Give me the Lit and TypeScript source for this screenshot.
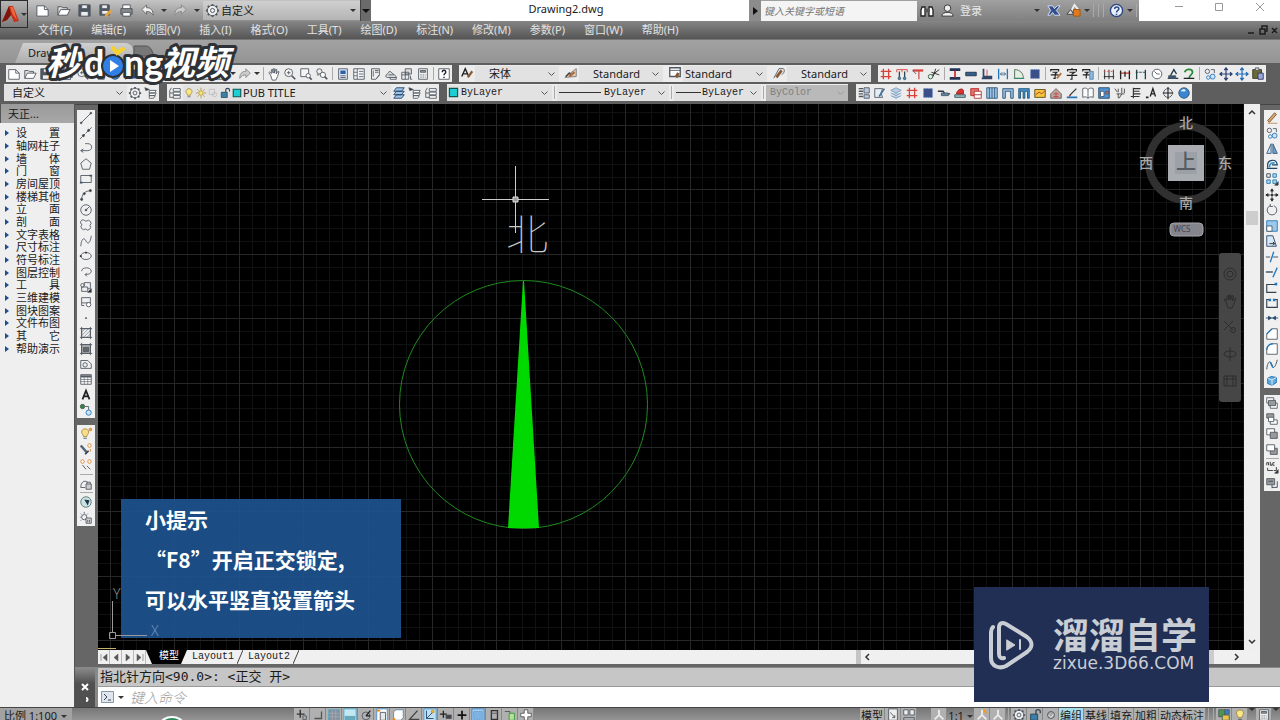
import { LitElement, html, svg, css, nothing, SVGTemplateResult } from "lit";
import { customElement } from "lit/decorators.js";

/* Glyphs of the toolbars, all on a 16 x 16 grid with a grey default stroke. */
const G: Record<string, SVGTemplateResult> = {
  new: svg`<path d="M2 3h8l4 4v7H2z" fill="#fff"/><path d="M10 3v4h4"/>`,
  open: svg`<path d="M2 13V4h4l1 1h5v3" fill="#ddd"/><path d="M2 13l3-6h10l-3 6z" fill="#fff"/>`,
  save: svg`<path d="M2 2h12v12H2z" fill="#4a5562"/><path d="M5 2h6v4H5zM4 9h8v5H4z" fill="#eee"/>`,
  saveas: svg`<path d="M2 2h10v11H2z" fill="#4a5562"/><path d="M4 2h6v4H4zM4 8h7v4H4z" fill="#eee"/><path d="M8 14l6-6" stroke="#e8a33c" stroke-width="3"/>`,
  print: svg`<path d="M4 6V2h8v4M4 11v3h8v-3z" fill="#fff"/><path d="M2 6h12v6H2z" fill="#888"/><path d="M4 10h8v4H4z" fill="#fff"/>`,
  undo: svg`<path d="M2 7l5-5v3c5 0 7 3 7 8-2-3-4-4-7-4v3z" fill="#eee" stroke="#666"/>`,
  redo: svg`<path d="M14 7L9 2v3c-5 0-7 3-7 8 2-3 4-4 7-4v3z" fill="#ccc" stroke="#888"/>`,
  gear: svg`<circle cx="8" cy="8" r="5.5" fill="#eee"/><circle cx="8" cy="8" r="2.2"/><path d="M8 1v2M8 13v2M1 8h2M13 8h2M3 3l1.5 1.5M11.500 11.500L13 13M13 3l-1.500 1.500M3 13l1.500-1.500" stroke-width="2"/>`,
  hand: svg`<path d="M4 9L2 6.500l1-.8 2 1.800V3l1.300-.3L7 7V2h1.500v5L10 2.500l1.200.4L10.500 8l2-3 1.200.5L12 11l-2 4H6z" fill="#fff"/>`,
  zoom: svg`<circle cx="6.500" cy="6.500" r="4.500" fill="#f5f5f5"/><path d="M10 10l4 4" stroke-width="2"/><path d="M4.500 6.500h4M6.500 4.500v4"/>`,
  zoomw: svg`<path d="M2 2h9v9H2z" fill="#f5f5f5"/><circle cx="10.500" cy="10" r="2.500" fill="#fff"/><path d="M12 12l2.500 2.500" stroke-width="2"/>`,
  zoomp: svg`<circle cx="5" cy="5" r="3"/><circle cx="9" cy="9" r="3" fill="#fff"/><path d="M11 11l3 3" stroke-width="2"/><path d="M2 9h3"/>`,
  prop: svg`<path d="M3 2h10v12H3z" fill="#dfe9f5"/><path d="M5 4h6v4H5z" fill="#2d5fa8" stroke="none"/><path d="M5 10h6M5 12h6"/>`,
  design: svg`<path d="M2 2h12v12H2z" fill="#f5f5f5"/><path d="M6 2v12M2 6h4M2 10h4M8 5h5M8 8h5M8 11h5" stroke="#567"/>`,
  palette: svg`<path d="M4 2h9v7l-4 5H4z" fill="#eee"/><path d="M6 4v7M8 4h4M8 6h4"/><path d="M10 13l3-4"/>`,
  sheet: svg`<path d="M2 11c0-3 3-3 4-6 3 0 3 3 6 4 2 1 2 3 2 3H4z" fill="#ddd"/><path d="M5 9h6M7 12h7v2H7z" fill="#fff"/>`,
  blocks: svg`<path d="M6 2h7v6H6z" fill="#ddd"/><path d="M2 6h8v8H2zM2 9h8M6 6v8"/><path d="M12 10v4h2"/>`,
  calc: svg`<path d="M3 2h10v12H3z" fill="#f5f5f5"/><path d="M5 4h6v2H5z" fill="#999"/><path d="M5 9h6M5 11.500h6" stroke-dasharray="1.500 1"/>`,
  help: svg`<path d="M2 2h12v12H2z" fill="#fff"/><path d="M6 6c0-3 4-3 4 0 0 1.500-2 1.500-2 3.500M8 11v1.500" stroke="#223" stroke-width="1.600"/>`,
  styleA: svg`<path d="M2 12L6 3l4 9M3.500 9h5" stroke="#222" stroke-width="1.600"/><path d="M9 13l5-7" stroke="#8a5a35" stroke-width="2.500"/>`,
  styleD: svg`<path d="M1 13L14 3v9z" fill="#e6c8b0" stroke="#777"/><path d="M2 12l4-4 2 2" stroke="#444" stroke-width="1.500"/><path d="M6 12l6-5" stroke="#a36b43" stroke-width="2.500"/>`,
  styleT: svg`<path d="M2 2h12v10H2z" fill="#fff" stroke-width="1.500"/><path d="M2 5h12"/><path d="M9 13l3-5" stroke="#8a5a35" stroke-width="3.500"/>`,
  styleM: svg`<path d="M2 14L8 3h5c2 2 1 5-2 7"/><path d="M5 13l6-8" stroke="#8a5a35" stroke-width="3"/>`,
  axis: svg`<path d="M5 2v12M11 2v12M2 5h12M2 11h12" stroke="#d8403a" stroke-width="1.500"/>`,
  axis2: svg`<path d="M2 3h12M2 3v3M8 3v3M14 3v3" stroke="#d8403a"/><path d="M5 5v9M11 5v9" stroke="#345" stroke-width="1.500"/><circle cx="5" cy="13" r="1.500" fill="#39c"/><circle cx="11" cy="13" r="1.500" fill="#39c"/>`,
  axis3: svg`<path d="M2 4h12" stroke="#d8403a" stroke-width="2.500"/><path d="M9 4v10" stroke="#c55" stroke-width="1.500"/><path d="M2 4l4 4" stroke="#456"/>`,
  scissor: svg`<path d="M6 9l8-6M5 6l9 3M10 2l-3 9" stroke="#222"/><circle cx="4" cy="11" r="2.500" stroke="#2a5a3a"/>`,
  wall: svg`<path d="M2 3h12M2 13h12" stroke="#235" stroke-width="3"/><path d="M8 4v8" stroke="#c33" stroke-width="2"/>`,
  bar: svg`<path d="M2 6h12v4H2z" fill="#2f5f8f" stroke="#234"/>`,
  wallL: svg`<path d="M4 2v9h10M2 13h12" stroke="#346" stroke-width="2"/><path d="M8 3v7" stroke="#c44"/>`,
  gap: svg`<path d="M3 2v12M13 2v12" stroke="#27b" stroke-width="1.500"/><path d="M5 8h6M7 6L5 8l2 2M9 6l2 2-2 2" stroke="#468"/>`,
  door: svg`<path d="M3 13V3c6 0 10 4 10 10z" fill="#e5efe0" stroke="#465"/><path d="M2 13h12" stroke="#286"/>`,
  col: svg`<path d="M3 3h10v10H3z" fill="#3a4f8a" stroke="#57b" stroke-dasharray="1 1"/>`,
  zi: svg`<path d="M2 5V3h9v2M4 6h5L7 8v5H5M2 9h9" stroke="#222" stroke-width="1.300"/><path d="M9 13l5-6" stroke="#b5703a" stroke-width="2"/>`,
  zi2: svg`<path d="M8 1v2M3 5V3h10v2M5 6h6L8 8v6H6M2 9.500h12" stroke="#222" stroke-width="1.300"/>`,
  zi3: svg`<path d="M2 5V3h8v2M4 6h4L6 8v5M2 9h8" stroke="#222" stroke-width="1.300"/><path d="M10 5h4v9h-4z" fill="#8bb7e0" stroke="#58a"/>`,
  dim: svg`<path d="M2 11h12M3 3v11M8 3v11M13 3v11" stroke="#222"/><path d="M2 5h12" stroke="#d44" stroke-dasharray="2 2"/>`,
  dim2: svg`<path d="M2 7h12" stroke="#d6402f" stroke-width="1.500"/><path d="M3 4v10M13 4v10M8 5v6" stroke="#222" stroke-width="1.500"/>`,
  dim3: svg`<path d="M2 6h12" stroke="#345" stroke-dasharray="3 1"/><path d="M3 3v11M13 3v11" stroke="#244" stroke-width="1.500"/>`,
  rad: svg`<circle cx="8" cy="8" r="5.500" fill="#fff"/><path d="M8 8L5 5M8 8h3"/>`,
  elev: svg`<path d="M2 13h12M5 10l4-7 3 5" stroke="#234" stroke-width="1.500"/><path d="M3 10h8v3H3z" fill="#357"/>`,
  rot: svg`<path d="M3 6c2-5 9-4 9 0 0 3-4 3-4 7" stroke="#2a8a35" stroke-width="2"/><path d="M2 13h12" stroke="#222" stroke-width="1.500"/>`,
  copy: svg`<circle cx="5" cy="5" r="2.500"/><circle cx="11" cy="11" r="2.800" fill="#cfe2f5" stroke="#27b"/><circle cx="6" cy="12" r="2" stroke="#27b"/><path d="M9 3h4v4"/>`,
  move: svg`<path d="M8 1v14M1 8h14M6 3.500L8 1l2 2.500M6 12.500L8 15l2-2.500M3.500 6L1 8l2.500 2M12.500 6L15 8l-2.500 2" stroke="#2b3d70" stroke-width="1.400"/>`,
  moveB: svg`<path d="M8 1v14M1 8h14M6 3.500L8 1l2 2.500M6 12.500L8 15l2-2.500M3.500 6L1 8l2.500 2M12.500 6L15 8l-2.500 2" stroke="#1d6ab5" stroke-width="1.400"/>`,
  moveG: svg`<path d="M8 1v5M8 10v5M1 8h5M10 8h5M6.500 3.500L8 1l1.500 2.500zM6.500 12.500L8 15l1.500-2.500zM3.500 6.500L1 8l2.500 1.500zM12.500 6.500L15 8l-2.500 1.500zM7 7h2v2H7z" stroke="#2c2c2c" fill="#2c2c2c"/>`,
  paste: svg`<path d="M2 3h10v10H2z" fill="#6b6a35" stroke="#332"/><path d="M5 1h4v3H5z" fill="#ccc"/><path d="M8 7h6v7H8z" fill="#9aa8d8" stroke="#336"/>`,
  layer: svg`<path d="M6 3h8v3H6zM6 7h8v3H6zM6 11h8v3H6z" fill="#fff"/><path d="M2 5v8h4M2 8h4M4 2L2 5"/>`,
  layerB: svg`<path d="M5 2h9l-3 4H2zM5 6h9l-3 4H2zM5 10h9l-3 4H2z" fill="#9cc3ea" stroke="#246"/>`,
  layerP: svg`<path d="M6 5h8l-2 3H6zM6 8h8l-2 3H6zM6 11h7l-2 3H6z" fill="#fff"/><path d="M1 2l5 2-4 1z" fill="#222"/>`,
  sheets: svg`<path d="M2 3h5M2 6h5M2 9h5M2 12h5" stroke-width="1.500"/><path d="M8 2h6v6H8zM8 10h6v4H8z" fill="#b9cbe0"/>`,
  notes: svg`<path d="M2 3h9l-2 5 2 5H2z" fill="#e5eef5"/><path d="M7 12l6-9" stroke="#48749c" stroke-width="2"/>`,
  stack: svg`<path d="M2 5l6-3 6 3-6 3zM2 8l6 3 6-3M2 11l6 3 6-3" fill="#b8cee5" stroke="#7b9cbd"/>`,
  beam: svg`<path d="M1 6h6l2 3h6" stroke="#334" stroke-width="1.600"/><path d="M5 8h8v3H5z" fill="#58a"/>`,
  roof: svg`<path d="M2 13h12v-3H2z" fill="#9bb" stroke="#356"/><path d="M4 9c0-5 8-8 8-3v3z" fill="#d8332c" stroke="#922"/>`,
  red: svg`<path d="M2 3h9v8H2z" fill="#e6726c" stroke="#b22"/><path d="M6 6h8v8H6z" fill="#fff" stroke="#a33"/><path d="M6 10h8" stroke="#a33"/>`,
  curtain: svg`<path d="M2 2h12v12H2z" fill="#9cc7ea" stroke="#357"/><path d="M5 2v12M8 2v12M11 2v12" stroke="#357"/>`,
  arch: svg`<path d="M2 3h12v11h-3V6H5v8H2z" fill="#8fb9df" stroke="#357"/>`,
  arch2: svg`<path d="M2 3h12v11h-2V6h-3v8H7V6H4v8H2z" fill="#3f90cf" stroke="#257"/>`,
  yellow: svg`<path d="M2 4h12v9H2z" fill="#f5c53a" stroke="#5a4a1a"/><path d="M3 10l4-3 3 2 4-4" stroke="#a33"/>`,
  house: svg`<path d="M2 9l6-6 6 6v5H2z" fill="#b9a7a0" stroke="#655"/><path d="M5 9h6M5 12h6M8 7v7" stroke="#c44"/>`,
  slope: svg`<path d="M2 13h12" stroke="#27b" stroke-width="2"/><path d="M5 11l8-8" stroke="#333" stroke-width="1.500"/><path d="M4 13l3-3" stroke="#c33"/>`,
  book: svg`<path d="M8 4c-2-2-4-2-6-1v10c2-1 4-1 6 1 2-2 4-2 6-1V3c-2-1-4-1-6 1zM8 4v10" fill="#fff"/>`,
  win: svg`<path d="M2 2h12v12H2z" fill="#4f96d6" stroke="#246"/><path d="M4 6h4v6H4z" fill="#fff"/><path d="M10 6h3v3h-3z" fill="#e66"/>`,
  misc: svg`<path d="M2 3l3 4M6 3v4M10 2v6M13 3v5M4 9h9M6 9v5M10 9l-3 5" stroke="#444"/>`,
  sect: svg`<path d="M5 2v12M5 3h8M5 6h7M5 9h8M2 12h10" stroke="#333" stroke-width="1.300"/>`,
  textA: svg`<path d="M4 13L8 3l4 10M5.500 9.500h5" stroke="#222" stroke-width="2"/>`,
  dotA: svg`<path d="M6 12l3-9 3 9M7 9h4" stroke="#222" stroke-width="1.500"/><path d="M1 13h3" stroke="#222" stroke-width="2"/>`,
  north: svg`<circle cx="8" cy="8" r="5"/><path d="M8 1v14M2 8h12" stroke="#222" stroke-width="1.300"/>`,
  globe: svg`<circle cx="8" cy="8" r="6" fill="#3a86d0" stroke="#357"/><path d="M4 6c2-3 5-3 6-1-1 2-4 1-6 1z" fill="#e4f1fb" stroke="none"/>`,
  line: svg`<path d="M2 14L14 2"/><circle cx="2.500" cy="13.500" r="1" fill="#456"/><circle cx="13.500" cy="2.500" r="1" fill="#456"/>`,
  xline: svg`<path d="M1 15L15 1" stroke-dasharray="4 1"/><circle cx="5" cy="11" r="1.200" fill="#333"/><circle cx="11" cy="5" r="1.200" fill="#333"/>`,
  pline: svg`<path d="M7 3h3c6 0 6 8 0 8H2M5 9l-3 2 3 2"/>`,
  poly: svg`<path d="M8 2l6 5-2 7H4L2 7z"/>`,
  rect: svg`<path d="M2 4h12v8H2z"/><path d="M1 11h3v2H1zM12 3h3v2h-3z" fill="#456" stroke="none"/>`,
  arc: svg`<path d="M3 14C3 7 7 3 14 3"/><circle cx="3" cy="13" r="1.200" fill="#333"/><circle cx="6" cy="6.500" r="1.200" fill="#333"/><circle cx="13" cy="3" r="1.200" fill="#333"/>`,
  circle: svg`<circle cx="8" cy="8" r="6"/><path d="M8 8l4-4"/><circle cx="8" cy="8" r="1" fill="#333"/>`,
  cloud: svg`<path d="M7 3.500a2.800 2.800 0 1 0-3.500 4 2.900 2.900 0 1 0 4 5 2.900 2.900 0 1 0 5-4 2.900 2.900 0 1 0-4-5z"/>`,
  spline: svg`<path d="M2 14C3 4 6 4 8 8s5 3 6-6"/>`,
  ellipse: svg`<ellipse cx="8" cy="8" rx="6" ry="4"/><path d="M7 3h2v2H7zM1 7h2v2H1z" fill="#333" stroke="none"/>`,
  earc: svg`<path d="M3 7c0-5 11-5 11 0 0 3-4 4-7 4M9 9l-2 2 2 2"/>`,
  insert: svg`<path d="M6 7V3h7v7h-3M3 8h7v5H3z"/><path d="M10 14h4v-4z" fill="#222"/><circle cx="4" cy="6" r="2"/>`,
  block: svg`<path d="M3 3h10v6H3z" /><circle cx="11" cy="11" r="2.500" fill="#fff"/><path d="M3 9v3h3"/>`,
  point: svg`<circle cx="8" cy="8" r="1" fill="#333" stroke="none"/>`,
  hatch: svg`<path d="M3 3h10v10H3z"/><path d="M3 7l4-4M3 11l8-8M5 13l8-8M9 13l4-4" stroke-width=".6"/><path d="M1 3h14M3 1v14M13 1v14M1 13h14"/>`,
  grad: svg`<path d="M3 3h10v10H3z" fill="#bbb"/><path d="M5 6h6v5H5z" fill="#666"/><path d="M1 3h14M3 1v14M13 1v14M1 13h14"/>`,
  region: svg`<path d="M2 4h8l4 4v5H2z"/><circle cx="7" cy="9" r="2.500"/>`,
  table: svg`<path d="M2 3h12v11H2z" fill="#fff"/><path d="M2 5h12" stroke-width="2.500"/><path d="M2 8.500h12M2 11h12M6 6v8M10 6v8" stroke-width=".7"/>`,
  add: svg`<circle cx="4" cy="4" r="2.500" fill="#2a8a35"/><path d="M7 4h4v4"/><circle cx="11" cy="11" r="3" fill="#cfe2f5" stroke="#27b"/>`,
  bulb: svg`<path d="M3 7c0-5 8-5 8 0 0 2-2 3-2 5H5c0-2-2-3-2-5z" fill="#f8dd8c" stroke="#a78a3c"/><path d="M5 14h4"/><circle cx="13" cy="4" r="1.500" fill="#f0a040" stroke="#c83"/>`,
  bulbO: svg`<path d="M4 6c0-5 8-5 8 0 0 2-2 3-2 5H6c0-2-2-3-2-5z" fill="#fbe884" stroke="#9a8440"/><path d="M6 13h4"/>`,
  brushO: svg`<path d="M2 4l7 8" stroke-width="3" stroke="#567"/><path d="M7 14l4-4" stroke-width="2" stroke="#345"/><circle cx="12" cy="4" r="2" fill="#fff" stroke="#d98324"/><path d="M13 8v3" stroke="#d98324"/>`,
  isoO: svg`<circle cx="4" cy="4" r="2" fill="#fff" stroke="#d98324"/><circle cx="12" cy="4" r="2" fill="#fff" stroke="#d98324"/><path d="M4 8l4 5M9 9l4 4"/>`,
  lockC: svg`<path d="M2 12C2 6 6 3 10 6M2 12h5"/><path d="M8 8h6v6H8z" fill="#ccc"/><path d="M9 8V6h4v2"/>`,
  ball: svg`<circle cx="8" cy="8" r="6" fill="#c9e4e8" stroke="#576"/><path d="M6 5l6 1-2 6z" fill="#234" stroke="none"/>`,
  sunL: svg`<circle cx="6" cy="7" r="3"/><path d="M6 1v2M1 7h1M2 3l1 1M10 3l-1 1M2 11l1-1"/><path d="M8 8h6v6H8z" fill="#ddd"/><path d="M10 10v3M12 10v3"/>`,
  sun: svg`<circle cx="8" cy="8" r="3" fill="#fbe57a" stroke="#a98a30"/><path d="M8 1v3M8 12v3M1 8h3M12 8h3M3 3l2 2M11 11l2 2M13 3l-2 2M3 13l2-2" stroke="#a98a30"/>`,
  vp: svg`<path d="M3 3h7v7H3z" stroke="#bbb"/><circle cx="10" cy="10" r="3" stroke="#bbb"/>`,
  unlock: svg`<path d="M3 7h8v7H3z" fill="#3a7fa8" stroke="#245"/><path d="M9 7V4c0-3 5-3 5 0v2" stroke="#345" stroke-width="1.500"/>`,
  swatch: svg`<path d="M3 3h10v10H3z" fill="#1ccfd2" stroke="#155" stroke-width="1.500"/>`,
  erase: svg`<path d="M3 11l8-9 2 2-8 9z" fill="#d9a56b" stroke="#753"/><path d="M3 14h11" stroke="#b85"/>`,
  mirror: svg`<path d="M7 2v11H2z" fill="#c9dff2" stroke="#357"/><path d="M9 2v11h5z" fill="#69a5dc" stroke="#357"/>`,
  offset: svg`<path d="M3 12V9c0-6 10-8 11 0H8M2 13h12" stroke="#246" stroke-width="1.400"/><path d="M5 12c0-5 4-6 6-5" stroke="#39c" stroke-width="2"/>`,
  array: svg`<path d="M2 2h4v4H2z" stroke="#345"/><path d="M9 2h4v4H9zM2 9h4v4H2zM9 9h4v4H9z" fill="#b5d6f2" stroke="#27a"/><path d="M15 11v4h-4z" fill="#222"/>`,
  rotate: svg`<path d="M6 3a5.500 5.500 0 1 0 4 0M6 1v3h3"/>`,
  scale: svg`<path d="M2 2h12v12H2z" fill="#9bc9ee" stroke="#27a"/><path d="M2 8h6v6H2z" fill="#fff"/>`,
  stretch: svg`<path d="M2 2h7l4 12H2z" fill="#d7e9f8" stroke="#246"/><path d="M5 11h6M9 9l2 2-2 2" stroke="#222"/>`,
  trim: svg`<path d="M1 8h5M9 8h6" stroke="#345"/><path d="M10 2L6 14" stroke="#27b" stroke-width="1.500"/>`,
  extend: svg`<path d="M1 8h8" stroke="#345" stroke-width="1.500"/><path d="M14 3L9 14" stroke="#27b" stroke-width="1.500"/>`,
  brk: svg`<path d="M12 4H2v9h11" stroke="#345" stroke-width="1.300"/><path d="M11 2h3v3h-3z" fill="#27b" stroke="none"/>`,
  brk2: svg`<path d="M5 4H2v9h12V4h-3" stroke="#345" stroke-width="1.300"/><path d="M4 3h3v3H4zM9 3h3v3H9z" fill="#27b" stroke="none"/>`,
  join: svg`<path d="M1 8h14M4 6l3 2-3 2zM12 6L9 8l3 2z" fill="#27b" stroke="#246"/>`,
  chamfer: svg`<path d="M2 14V8l6-6h6v12z" fill="#fff"/><path d="M2 8l6-6" stroke="#27b" stroke-width="1.500"/>`,
  fillet: svg`<path d="M2 14V9c0-4 3-7 7-7h5v12z" fill="#fff"/><path d="M2 9c0-4 3-7 7-7" stroke="#27b" stroke-width="1.500"/>`,
  blend: svg`<path d="M2 13C3 2 7 3 8 8s4 3 6-6" stroke="#345"/><path d="M6 5l3 6" stroke="#27b" stroke-width="1.500"/>`,
  explode: svg`<path d="M3 6l4-2 6 1v6l-5 3-5-2z" fill="#5fabe0" stroke="#1b6aa8"/><path d="M3 6l5 2 5-3M8 8v6" stroke="#e8f4ff"/>`,
  ord1: svg`<path d="M2 2h8v6H2z" fill="#fff"/><path d="M6 8h8v6H6z" fill="#fff"/><path d="M4 5h8v6H4z" fill="#9a9a9a"/>`,
  ord2: svg`<path d="M2 2h8v5H2z" fill="#999"/><path d="M6 9h8v5H6z" fill="#fff"/><path d="M4 6h6v5H4z" fill="#fff"/>`,
  ord3: svg`<path d="M2 2h9v7H2z" fill="#fff"/><path d="M6 6h8v7H6z" fill="#999"/>`,
  ord4: svg`<path d="M6 6h8v7H6z" fill="#999"/><path d="M2 2h9v7H2z" fill="#fff"/>`,
  abc: svg`<path d="M2 6V3h2v3M6 2v4h2V4M11 3H9v3h2M3 9v3h6M13 8v4h-3" stroke="#333"/><path d="M15 11v4h-4z" fill="#222"/>`,
  hback: svg`<path d="M2 3h9v7H2z" fill="#999"/><path d="M4 6h5M8 13h6V6M8 10v4" stroke="#345"/>`,
  snap: svg`<path d="M6 2v9M2 7h9" stroke="#333" stroke-width="1.600"/><path d="M9 9h4v4H9z"/>`,
  corner: svg`<path d="M12 4v8H4" stroke="#555" stroke-width="1.500"/>`,
  gridI: svg`<path d="M2 2h12v13H2z" fill="#8a8f98" stroke="#4aa3c8"/><path d="M2 6h12M2 10h12M6 2v12M10 2v12" stroke="#abc" stroke-width=".6"/>`,
  ortho: svg`<path d="M1 1h14v14H1z" fill="#c2e8f2" stroke="#4aa3c8"/><path d="M2 9h12v6H2z" fill="#6ab" stroke="none"/>`,
  polar: svg`<circle cx="8" cy="9" r="4.500"/><path d="M8 9l5-6M8 9h5" stroke="#222" stroke-width="1.500"/>`,
  osnap: svg`<path d="M2 1h12v14H2z" fill="#fff" stroke="#4a8fc8"/><path d="M6 5h6v9H6z" fill="#e8e8e8"/><path d="M2 3h4" stroke="#e80" stroke-width="2"/>`,
  osnap3: svg`<path d="M3 4l3-2h8v9l-3 3H3z" fill="#fff" stroke="#58a"/><path d="M2 13h3" stroke="#e80" stroke-width="2.500"/>`,
  angle: svg`<path d="M12 3L3 13h11" stroke="#444" stroke-width="1.500"/>`,
  ducs: svg`<path d="M1 1h14v14H1z" fill="#bfe0f5" stroke="#4a9cd0"/><path d="M4 3v9h8M4 12l7-7" stroke="#246"/><circle cx="11" cy="4" r="1.500" fill="#fb3" stroke="#c80"/>`,
  dyn: svg`<path d="M5 3v8M1 7h8" stroke="#222" stroke-width="1.500"/><path d="M8 8h6v4H8z" fill="#444"/>`,
  plus: svg`<path d="M8 3v10M3 8h10" stroke="#111" stroke-width="2"/>`,
  tpy: svg`<path d="M1 1h14v14H1z" fill="#a9cdf0" stroke="#3a86c8"/><path d="M3 4h10v9H3z" fill="#7db2e5" stroke="#58a" stroke-dasharray="1 1"/>`,
  qp: svg`<path d="M5 3h7v10H5z" stroke="#333" stroke-width="1.500"/><path d="M5 6h7"/>`,
  sc: svg`<path d="M2 4h6v4" stroke="#555"/><path d="M7 6h6v8H7z" fill="#b5e09c" stroke="#393"/>`,
  cross: svg`<path d="M6 2h4v4h4v4h-4v4H6v-4H2V6h4z" fill="#fff" stroke="#555"/>`,
  bino: svg`<path d="M3 4h3v9H2V7zM10 4h3l1 3v6h-4z" fill="#fff" stroke="#222" stroke-width="1.300"/><path d="M6 6h4v3H6z" fill="#555"/>`,
  user: svg`<circle cx="8" cy="5.500" r="3.500" fill="#eee" stroke="#333"/><path d="M2 14c0-3 3-4 6-4s6 1 6 4z" fill="#eee" stroke="#333"/>`,
  exch: svg`<path d="M2 3h5l2 3 3-3h3l-4 5 4 5H9L7 10l-2 3H2l3-5z" fill="#2f4d8f" stroke="#dbe4f5"/>`,
  cart: svg`<path d="M6 8L9 2l4 5" stroke="#eee" stroke-width="2"/><path d="M1 12l4-5 3 5z" fill="#ddd" stroke="#444"/><path d="M8 7h7v7H8z" fill="#e07b22" stroke="#a50"/>`,
  q: svg`<circle cx="8" cy="8" r="6.500" fill="#e9eff8" stroke="#2d4a85" stroke-width="1.500"/><path d="M6 6.500c0-3 4.500-3 4.500 0C10.500 8 8 8 8 10M8 11.500V13" stroke="#2d4a85" stroke-width="1.600"/>`,
  tri: svg`<path d="M8 2v6l-5 5M8 8l5 5" stroke="#eee" stroke-width="2"/>`,
  triY: svg`<path d="M8 2v6l-5 5M8 8l5 5" stroke="#eee" stroke-width="2"/><path d="M10 2l3 4" stroke="#f90" stroke-width="2"/>`,
  sheetW: svg`<path d="M3 1h10v13H3z" fill="#eee"/><path d="M5 5l5 6M10 8v3H7"/>`,
  tiles: svg`<path d="M2 2h5v6H2zM9 2h5v6H9z" fill="#eee"/><path d="M2 11h12v3H2z" fill="#bbb"/>`,
  hw: svg`<circle cx="8" cy="8" r="4" fill="#aaa"/><path d="M5 8l3 3 3-4" stroke="#eee"/>`,
  hwC: svg`<path d="M2 2h7v8H2z" fill="#4b9a4b"/><path d="M6 8h8v6H6z" fill="#e6c64a"/><path d="M9 2h5v5H9z" fill="#3a7fc8"/>`,
  wheel: svg`<circle cx="8" cy="8" r="6"/><circle cx="8" cy="8" r="3"/>`,
  palm: svg`<path d="M4 9L2 6.500l1-.8 2 1.800V3l1.300-.3L7 7V2h1.500v5L10 2.500l1.200.4L10.500 8l2-3 1.200.5L12 11l-2 4H6z"/>`,
  lens: svg`<path d="M2 2l9 9M11 2l-9 9"/><circle cx="11" cy="11" r="2.500"/>`,
  orbit: svg`<path d="M8 1v14"/><ellipse cx="8" cy="8" rx="6" ry="3"/>`,
  film: svg`<path d="M2 3h12v10H2zM5 3v10M11 3v10M2 6h12"/>`,
};

const ic = (n: string, s = 14) =>
  svg`<svg class="ic" width=${s} height=${s} viewBox="0 0 16 16" fill="none" stroke="#505862" stroke-width="1" aria-hidden="true">${G[n]}</svg>`;

const caret = html`<i class="caret"></i>`;
const chev = html`<svg class="chev" width="7" height="5" viewBox="0 0 7 5" fill="none" stroke="#555"><path d="M.5.5l3 3 3-3"/></svg>`;

/* "|" is a separator, "v" a small drop-down arrow, anything else a button. */
const tools = (list: string) =>
  list.split(" ").map((n) =>
    n === "|" ? html`<i class="sep"></i>` : n === "v" ? html`<span class="v">${caret}</span>` : html`<button class="tb" aria-label=${n}>${ic(n)}</button>`
  );

const combo = (label: string, value: string, cls: string, over: unknown = nothing, disabled = false) => html`
  <label class="combo ${cls}"><select aria-label=${label} ?disabled=${disabled}><option>${value}</option></select>
    <span class="over">${over}</span>${chev}</label>`;

const MENU = ["文件(F)", "编辑(E)", "视图(V)", "插入(I)", "格式(O)", "工具(T)", "绘图(D)", "标注(N)", "修改(M)", "参数(P)", "窗口(W)", "帮助(H)"];
const TREE = ["设置", "轴网柱子", "墙体", "门窗", "房间屋顶", "楼梯其他", "立面", "剖面", "文字表格", "尺寸标注", "符号标注", "图层控制", "工具", "三维建模", "图块图案", "文件布图", "其它", "帮助演示"];

@customElement("app-root")
export class AppRoot extends LitElement {
  static styles = css`
    :host { display: flex; flex-direction: column; height: 100vh; overflow: hidden; position: relative; background: #666;
      font: 11px/14px "Noto Sans", "Noto Sans CJK SC", sans-serif; color: #1a1a1a; }
    * { box-sizing: border-box; }
    button, select, input { font: inherit; color: inherit; border: 0; padding: 0; margin: 0; background: none; border-radius: 0; }
    .ic, .chev { display: block; flex: none; }
    .caret { width: 0; height: 0; border: 3px solid transparent; border-top-color: #333; border-bottom: 0; display: block; flex: none; }

    .title { display: flex; height: 21px; flex: none; background: #fff; align-items: stretch; }
    .logo { width: 28px; height: 28px; flex: none; background: linear-gradient(#b5b5b5, #7c7c7c); border: 1px solid #2b2b2b; position: relative; z-index: 2; display: flex; align-items: center; gap: 1px; }
    .qat { display: flex; align-items: center; padding-left: 4px; background: linear-gradient(#c4c4c4, #8e8e8e); width: 343px; flex: none; }
    .qat .tb { width: 21px; }
    .qat .v { width: 12px; }
    .qend { flex: 1; height: 21px; background: #6b6b6b; display: flex; align-items: center; justify-content: center; border-left: 1px solid #444; }
    .qend .caret { border-width: 4px; border-bottom: 0; border-top-color: #111; }
    .name { flex: 1; text-align: center; line-height: 17px; padding-left: 12px; }
    .info { display: flex; width: 390px; flex: none; align-items: center; background: linear-gradient(#a0a0a0, #808080); }
    .more { width: 12px; height: 21px; background: #8c8c8c; display: flex; align-items: center; justify-content: center; }
    .more i { border: 4px solid transparent; border-left: 5px solid #111; border-right: 0; }
    .search { width: 156px; height: 20px; background: #f4f4f4; font-style: italic; font-size: 10px; padding-left: 3px; }
    .search::placeholder { color: #777; opacity: 1; }
    .info .tb { width: 20px; }
    .login { color: #e8e8e8; display: flex; align-items: center; justify-content: space-between; flex: 1; padding: 0 3px; }
    .winctl { display: flex; width: 141px; flex: none; padding-left: 20px; }
    .winctl button { flex: 1; display: flex; justify-content: center; align-items: flex-start; padding-top: 2px; }

    .menu { height: 18px; flex: none; display: flex; gap: 19px; align-items: center; background: linear-gradient(#858585, #555); padding-left: 38px; }
    .menu button { color: #e2e2e2; flex: none; }
    .menu .mdi { margin-left: auto; width: 34px; flex: none; }
    .mdi svg { display: block; }

    .docs { height: 24px; flex: none; background: linear-gradient(#a2a2a2, #949494); padding: 3px 0 0 15px; position: relative; border-top: 1px solid #777; }
    .doctab { width: 118px; height: 20px; padding-left: 13px; text-align: left; background: linear-gradient(#cfcfcf, #adadad); border-radius: 6px 8px 0 0; clip-path: polygon(8px 0, 100% 0, 100% 100%, 0 100%); }
    .brand { position: absolute; left: 38px; top: 0; z-index: 3; }
    .brand text { font: italic bold 34px "Noto Sans CJK SC", sans-serif; fill: #fff; stroke: #2e3136; stroke-width: 6px; stroke-linejoin: round; paint-order: stroke; }
    .brand .latin { font: bold 36px "Lato", sans-serif; }

    .bars { background: #5e5e5e; padding: 2px 0 3px; flex: none; display: flex; flex-direction: column; gap: 2px; }
    .bar { display: flex; height: 17px; gap: 7px; padding-left: 6px; }
    .bar.b { gap: 8px; padding-left: 4px; }
    .seg { display: flex; background: #ececec; align-items: center; flex: none; }
    .seg.styles { gap: 4px; }
    .grp { display: flex; }
    .tb { width: 16px; height: 15px; display: flex; align-items: center; justify-content: center; flex: none; }
    .sep { width: 5px; height: 13px; flex: none; border-right: 2px solid transparent; border-left: 2px solid transparent; background: #aaa; background-clip: padding-box; }
    .v { width: 8px; display: flex; justify-content: center; flex: none; }
    .combo { position: relative; display: block; height: 16px; background: #e2e2e2; flex: none; }
    .combo select { appearance: none; display: block; width: 100%; height: 100%; opacity: 1; }
    .combo .chev { position: absolute; right: 4px; top: 6px; }
    .combo .over { position: absolute; left: 0; top: 0; height: 100%; display: flex; align-items: center; pointer-events: none; }
    .combo.ws { width: 157px; height: 19px; background: linear-gradient(#d0d0d0, #b4b4b4); }
    .combo.ws select { padding-left: 18px; }
    .combo.ws .chev { display: none; }
    .combo.ws .over { width: 100%; justify-content: space-between; padding: 0 4px 0 2px; }
    .w84 { width: 84px; } .w84 select { padding-left: 14px; } .w84.tight select { padding-left: 2px; }
    .w123 { width: 123px; } .w123 select { padding-left: 8px; }
    .w208 { width: 208px; } .w208 select { padding-left: 60px; }
    .mono select { font-family: "Liberation Mono", monospace; font-size: 10px; }
    .w105 { width: 105px; } .w105 select { padding-left: 14px; }
    .w112 { width: 112px; } .w112 select { padding-left: 47px; }
    .w87 { width: 87px; } .w87 select { padding-left: 28px; }
    .w82 { width: 82px; background: #b9b9b9; color: #808080; } .w82 select { padding-left: 4px; } .w82 .chev { opacity: .3; }
    .rule { height: 1px; background: #333; margin-left: 2px; width: 42px; }
    .rule.s { width: 25px; }

    .work { flex: 1; display: flex; min-height: 0; }
    .side { width: 75px; flex: none; background: #efefef; border-right: 1px solid #555; }
    .side h2 { margin: 0; height: 19px; font: inherit; line-height: 20px; padding-left: 7px; background: linear-gradient(#9a9a9a, #a8a8a8); border-left: 1px solid #555; }
    .tree { list-style: none; margin: 4px 0 0; padding: 0 14px 0 5px; height: 228px; display: grid; grid-auto-rows: 1fr; }
    .tree button { width: 100%; height: 100%; display: flex; align-items: center; gap: 7px; line-height: 12px; }
    .tree i { border: 3px solid transparent; border-left: 4px solid #1b4f8f; border-right: 0; }
    .tree span { flex: 1; display: flex; justify-content: space-between; }
    .tree em { font-style: normal; }
    .right { flex: 1; display: flex; flex-direction: column; min-width: 0; }
    .mid { flex: 1; display: flex; min-height: 0; }
    .strip { flex: none; background: #666; padding: 5px 3px 0 2px; width: 23px; border-top: 1px solid #444; }
    .strip.r { width: 20px; padding: 5px 0 0 4px; }
    .pal { background: #f0f0f0; display: flex; flex-direction: column; align-items: center; justify-content: space-around; }
    .pal .tb { height: 15px; }
    .pal .sep { height: 1px; width: 13px; border: 0; }
    .p308 { height: 308px; } .p100 { height: 101px; margin-top: 7px; } .p278 { height: 278px; } .p96 { height: 96px; margin-top: 7px; }
    .center { flex: 1; display: flex; flex-direction: column; min-width: 0; margin-bottom: 3px; }
    .view { flex: 1; display: flex; min-height: 0; }
    .canvas { flex: 1; background: #000; position: relative; overflow: hidden; min-width: 0; }
    .canvas .plot { display: block; width: 100%; height: 100%; }
    .north { font: 42px "Noto Sans CJK SC", sans-serif; font-weight: 100; fill: #ccc; }
    .tip { position: absolute; left: 23px; bottom: 12px; width: 280px; height: 139px; padding: 0 24px; background: rgba(29, 83, 142, .92); color: #fff; font: bold 21px/40px "Noto Sans CJK SC", sans-serif; }
    .tip p { margin: 0; white-space: nowrap; }
    .ucs { position: absolute; left: 0; bottom: 0; }
    .ucs text { font: 14px "Noto Sans", sans-serif; font-weight: 300; fill: #888; }
    .ucs .x { fill: #6e93bd; }
    .cube { position: absolute; right: 0; top: 0; }
    .cube text { font: 500 14px "Noto Sans CJK SC", sans-serif; fill: #a8a8a8; text-anchor: middle; }
    .cube .top { font: 500 20px "Noto Sans CJK SC", sans-serif; fill: #555b60; }
    .cube .wcs { font: 8px "Noto Sans", sans-serif; fill: #44444c; }
    .nav { position: absolute; right: 3px; top: 149px; width: 22px; height: 149px; border-radius: 3px; background: #464646; display: flex; flex-direction: column; align-items: center; justify-content: space-around; padding: 8px 0; }
    .nav .ic { stroke: #2c2c2c; }
    .vs { width: 16px; flex: none; background: #efefef; display: flex; flex-direction: column; align-items: center; padding: 5px 0; }
    .vs .thumb { width: 12px; height: 14px; background: #cdcdcd; margin: 96px 0 auto; }
    .tabs { height: 14px; flex: none; background: #f0f0f0; display: flex; align-items: center; font: 10px/12px "Liberation Mono", "Noto Sans CJK SC", monospace; }
    .pager { width: 12px; height: 14px; border-right: 1px solid #bbb; display: flex; align-items: center; justify-content: center; }
    .tab { height: 14px; padding: 0 3px 0 5px; display: flex; align-items: center; }
    .tab.on { background: #000; color: #fff; padding: 0 8px 0 13px; clip-path: polygon(0 0, 100% 0, calc(100% - 6px) 100%, 6px 100%); }
    .tabs .slash { width: 6px; height: 14px; }
    .hs { margin-left: auto; width: 404px; height: 14px; display: flex; align-items: center; }
    .hs b { width: 5px; height: 14px; background: #c4c4c4; margin-right: 3px; }
    .hs u { width: 26px; height: 14px; background: #ccc; margin: 0 20px 0 auto; }
    .hs .end { margin-right: 20px; }

    .cmd { height: 40px; flex: none; display: flex; border-top: 1px solid #888; }
    .grip { width: 23px; flex: none; background: linear-gradient(#8a8a8a, #505050 40%); color: #fff; border-right: 3px solid #888; padding-top: 10px; display: flex; justify-content: center; align-items: flex-start; }
    .lines { flex: 1; }
    .log { height: 19px; background: #c6c6c6; border-bottom: 1px solid #999; font: 13px/18px "DejaVu Sans Mono", "Noto Sans CJK SC", monospace; padding-left: 2px; white-space: pre; }
    .prompt { height: 20px; background: #fff; display: flex; align-items: center; gap: 4px; padding-left: 3px; }
    .prompt input { flex: 1; font: italic 14px/18px "Noto Sans CJK SC", sans-serif; font-weight: 300; padding-left: 2px; }
    .prompt input::placeholder { color: #9b9b9b; opacity: 1; }

    .status { height: 13px; flex: none; overflow: hidden; background: linear-gradient(#777, #949494); border-top: 1px solid #444; display: flex; align-items: flex-start; line-height: 16px; position: relative; }
    .scale { width: 72px; display: flex; align-items: center; justify-content: space-between; padding: 0 5px 0 4px; background: #a2a2a2; height: 16px; flex: none; }
    .coord { width: 222px; flex: none; }
    .pill { position: absolute; left: 160px; top: 8px; }
    .status .tb { width: 16px; height: 14px; background: #b0b0b0; border-right: 1px solid #888; }
    .status .txt { height: 16px; padding: 0 1px; background: #b0b0b0; border-right: 1px solid #888; flex: none; }
    .status .txt.on { background: #a7dcea; }
    .status .rgt { margin-left: auto; display: flex; height: 16px; }
    .status .gap { width: 14px; }
    .status .ratio { width: 27px; display: flex; align-items: center; justify-content: space-around; }

    .mark { position: absolute; right: 71px; bottom: 18px; width: 235px; height: 115px; background: #222f54; color: #c9cdd4; display: flex; align-items: center; gap: 17px; padding-left: 14px; z-index: 5; }
    .mark strong { display: block; font: bold 36px/36px "Noto Sans CJK SC", sans-serif; }
    .mark span { display: block; font: 17px/24px "DejaVu Sans", sans-serif; }
  `;

  private grid() {
    const out: SVGTemplateResult[] = [];
    const step = 12.88;
    for (const major of [false, true]) {
      for (let i = -1; i < 200; i++) {
        if ((i % 5 === 0) !== major) continue;
        const x = Math.round(12 + i * step) + 0.5;
        const y = Math.round(21 + i * step) + 0.5;
        const c = major ? "#252729" : "#101112";
        out.push(svg`<path d="M${x} 0v2000M0 ${y}h3000" stroke=${c}/>`);
      }
    }
    return out;
  }

  render() {
    return html`
      <header class="title">
        <button class="logo" aria-label="应用程序"><svg width="19" height="20" viewBox="0 0 19 20"><path d="M1 18L8 2h4l6 15-5 1-3-7-4 5z" fill="#c8301a"/><path d="M8 2l-7 16 5-2 4-5z" fill="#7d150c"/><path d="M9 3l3 8 4 5-4-13z" fill="#ee6a3c"/></svg>${caret}</button>
        <div class="qat">${["new", "open", "save", "saveas", "print", "undo"].map((n) => html`<button class="tb" aria-label=${n}>${ic(n, 15)}</button>`)}
          <span class="v">${caret}</span><button class="tb" aria-label="redo">${ic("redo", 15)}</button><span class="v">${caret}</span>
          ${combo("工作空间", "自定义", "ws", html`${ic("gear", 15)}${caret}`)}
          <button class="qend" aria-label="更多">${caret}</button></div>
        <div class="name">Drawing2.dwg</div>
        <div class="info"><button class="more" aria-label="展开"><i></i></button><input class="search" aria-label="搜索" placeholder="键入关键字或短语" />
          <button class="tb" aria-label="搜索">${ic("bino", 16)}</button><button class="tb" aria-label="用户">${ic("user", 15)}</button>
          <button class="login">登录${caret}</button>
          <button class="tb" aria-label="交换">${ic("exch", 15)}</button><button class="tb" aria-label="应用商店">${ic("cart", 15)}</button><span class="v">${caret}</span>
          <i class="sep"></i><i class="sep"></i><i class="sep"></i><button class="tb" aria-label="帮助">${ic("q", 15)}</button><span class="v">${caret}</span><i class="sep"></i></div>
        <div class="winctl">
          <button aria-label="最小化"><svg width="10" height="10" fill="none" stroke="#999"><path d="M1 4.500h8"/></svg></button>
          <button aria-label="最大化"><svg width="10" height="10" fill="none" stroke="#999"><path d="M1.500 1.500h7v7h-7z"/></svg></button>
          <button aria-label="关闭"><svg width="10" height="10" fill="none" stroke="#999"><path d="M1 1l8 8M9 1L1 9"/></svg></button></div>
      </header>
      <nav class="menu">${MENU.map((m) => html`<button>${m}</button>`)}
        <span class="mdi"><svg width="34" height="10" fill="none" stroke="#1d1d1d" stroke-width="1.500"><path d="M2 8h6M14 4h5v5h-5zM16 4V1h5v5h-2M26 3l5 5M31 3l-5 5"/></svg></span></nav>
      <div class="docs"><button class="doctab">Drawing2</button>
        <svg class="brand" width="204" height="48" viewBox="0 0 204 48">
          <path d="M96 6h12c4 0 6 4 8 10H96z" fill="#777" stroke="#555"/>
          <text x="8" y="35">秒</text><text class="latin" x="46" y="36">d</text><text class="latin" x="86" y="36">ng</text><text x="123" y="35">视频</text>
          <circle cx="75" cy="26" r="11" fill="#2f7fe6" stroke="#2e3136" stroke-width="2"/><path d="M72 20l9 6-9 6z" fill="#fff"/>
          <path d="M75 8l4 5 6-4" fill="none" stroke="#f7d22c" stroke-width="4" stroke-linecap="round"/>
        </svg></div>
      <div class="bars">
        <div class="bar">
          <div class="seg">${tools("new open save | print zoom sheet globe | col copy paste notes | design blocks v redo v | hand zoom zoomw zoomp | prop design palette sheet blocks calc | help")}</div>
          <div class="seg styles">
            ${[["文字样式", "宋体", "styleA", ""], ["标注样式", "Standard", "styleD", ""], ["表格样式", "Standard", "styleT", "tight"], ["引线样式", "Standard", "styleM", ""]].map(
              ([l, v, i, c]) => html`<div class="grp"><button class="tb" aria-label=${l}>${ic(i)}</button>${combo(l, v, "w84 " + c)}</div>`)}</div>
          <div class="seg">${tools("axis axis2 axis3 scissor | wall bar wallL gap door col | zi zi2 zi3 | dim dim2 dim3 rad elev rot | copy move moveB paste")}</div>
        </div>
        <div class="bar b">
          <div class="seg">${combo("工作空间", "自定义", "w123")}${tools("gear layerP")}</div>
          <div class="seg">${tools("layer")}${combo("图层", "PUB TITLE", "w208", ["bulbO", "sun", "vp", "unlock", "swatch"].map((n) => ic(n, 12)))}${tools("layerB layerP layer")}</div>
          <div class="seg">${combo("颜色", "ByLayer", "w105 mono", ic("swatch", 13))}<i class="sep"></i>
            ${combo("线型", "ByLayer", "w112 mono", html`<i class="rule"></i>`)}<i class="sep"></i>
            ${combo("线宽", "ByLayer", "w87 mono", html`<i class="rule s"></i>`)}<i class="sep"></i>
            ${combo("打印样式", "ByColor", "w82 mono", nothing, true)}</div>
          <div class="seg">${tools("sheets notes stack axis col beam roof red curtain arch arch2 yellow house slope book win misc sect dotA north globe")}</div>
        </div>
      </div>
      <div class="work">
        <aside class="side"><h2>天正...</h2>
          <ul class="tree">${TREE.map((t) => html`<li><button aria-label=${t}><i></i><span>${t.length === 2 ? [...t].map((c) => html`<em>${c}</em>`) : t}</span></button></li>`)}</ul></aside>
        <div class="right">
          <div class="mid">
            <div class="strip"><div class="pal p308">${tools("line xline pline poly rect arc circle cloud spline ellipse earc insert block point hatch grad region table textA add")}</div>
              <div class="pal p100">${tools("bulb brushO isoO | lockC | ball sunL")}</div></div>
            <div class="center">
              <div class="view">
                <main class="canvas">
                  <svg class="plot" fill="none">
                    ${this.grid()}
                    <circle cx="425.500" cy="300.500" r="124" stroke="#1f8a1f"/>
                    <path d="M425 177l1 0L441 424h-31z" fill="#00d900"/>
                    <text class="north" x="408" y="146">北</text>
                    <path d="M417.500 62v67M384 95.500h67" stroke="#ccc"/><path d="M415 93h5v5h-5z" fill="#999" stroke="#ddd"/>
                  </svg>
                  <section class="tip"><p>小提示</p><p>“F8”开启正交锁定,</p><p>可以水平竖直设置箭头</p></section>
                  <svg class="ucs" width="70" height="66" fill="none" stroke="#9a9a9a"><path d="M14.500 48V17M18 51.500h31M11.500 48.500h6v6h-6z"/><path d="M0 64.500h18" stroke="#c9b26a"/><text stroke="none" x="15" y="15">Y</text><text stroke="none" class="x" x="53" y="52">X</text></svg>
                  <svg class="cube" width="116" height="140" viewBox="0 0 116 140"><circle cx="58" cy="59" r="37" fill="none" stroke="#303030" stroke-width="8"/>
                    <path d="M40 41h36v36H40z" fill="#a9adb1"/><path d="M47 48h22v22H47z" fill="#9ba1a6"/><text class="top" x="58" y="65">上</text>
                    <text x="58" y="24">北</text><text x="58" y="104">南</text><text x="18" y="64">西</text><text x="97" y="64">东</text>
                    <rect x="42" y="119" width="33" height="13" rx="4" fill="#85858e" stroke="#a5a5ad"/><text class="wcs" x="54" y="128">WCS</text></svg>
                  <div class="nav">${["wheel", "palm", "lens", "orbit", "film"].map((n) => svg`<svg class="ic" width="16" height="16" viewBox="0 0 16 16" fill="none">${G[n]}</svg>`)}</div>
                </main>
                <div class="vs"><svg width="8" height="6" fill="none" stroke="#333" stroke-width="1.500"><path d="M1 5l3-3 3 3"/></svg><i class="thumb"></i>
                  <svg width="8" height="6" fill="none" stroke="#333" stroke-width="1.500"><path d="M1 1l3 3 3-3"/></svg></div>
              </div>
              <div class="tabs">
                ${["M2 1v7M8 1L4 4.500 8 8z", "M7 1L3 4.500 7 8z", "M3 1l4 3.500L3 8z", "M2 1l4 3.500L2 8zM8 1v7"].map((d) => html`<button class="pager" aria-label="翻页"><svg width="10" height="9" fill="#555" stroke="#666" stroke-width=".6"><path d=${d}/></svg></button>`)}
                <button class="tab on">模型</button>
                ${["Layout1", "Layout2"].map((t) => html`<button class="tab">${t}</button><svg class="slash" stroke="#444"><path d="M6 0L0 14"/></svg>`)}
                <div class="hs"><b></b><svg width="6" height="8" fill="none" stroke="#333" stroke-width="1.500"><path d="M5 1L2 4l3 3"/></svg><u></u><svg class="end" width="6" height="8" fill="none" stroke="#333" stroke-width="1.500"><path d="M1 1l3 3-3 3"/></svg></div>
              </div>
            </div>
            <div class="strip r"><div class="pal p278">${tools("erase copy mirror offset array moveG rotate scale stretch trim extend brk brk2 join chamfer fillet blend explode")}</div>
              <div class="pal p96">${tools("ord1 ord2 ord3 ord4 | abc hback")}</div></div>
          </div>
          <div class="cmd"><button class="grip" aria-label="关闭命令行"><svg width="8" height="24" fill="none" stroke="#fff" stroke-width="2"><path d="M1 6l6 6M7 6l-6 6M5 23c2 0 2-3 0-3"/></svg></button>
            <div class="lines"><div class="log">指北针方向&lt;90.0&gt;: &lt;正交 开&gt;</div>
              <div class="prompt"><svg width="13" height="12" fill="#dfe6ee" stroke="#8a97a5"><path d="M.5.500h12v11H.500z"/><path d="M3 3l3 3-3 3M7 9h3" fill="none" stroke="#345"/></svg>${caret}<input aria-label="命令" placeholder="键入命令" /></div></div></div>
        </div>
      </div>
      <footer class="status">
        <button class="scale">比例 1:100${caret}</button><span class="coord"></span>
        <svg class="pill" width="24" height="6"><ellipse cx="12" cy="8" rx="11" ry="7" fill="#2a8a5a" stroke="#fff" stroke-width="2"/></svg>
        ${tools("snap corner gridI ortho polar osnap osnap3 angle ducs dyn plus tpy qp sc cross")}
        <div class="rgt"><button class="txt">模型</button>${tools("sheetW tiles")}<i class="gap"></i>${tools("tri")}<button class="ratio">1:1${caret}</button>${tools("triY tri")}<i class="sep"></i>${tools("gear unlock hw")}
          <button class="txt on">编组</button><button class="txt">基线</button><button class="txt">填充</button><button class="txt">加粗</button><button class="txt">动态标注</button><i class="sep"></i><i class="sep"></i>${tools("hwC bulbO v calc v")}</div>
      </footer>
      <div class="mark">
        <svg width="48" height="50" viewBox="0 0 48 50" fill="none" stroke="#c9cdd4" stroke-width="4" stroke-linecap="round" stroke-linejoin="round"><path d="M16 38c-3 1-5-1-5-4V8c0-5 3-6 7-4l21 13c6 5 6 10 0 15L18 46c-6 3-15 1-15-8V12c0-2 1-4 2-5"/><path d="M19 20l8 5-8 5z" fill="#c9cdd4" stroke-width="1"/><path d="M32 20v9" stroke-width="2"/></svg>
        <div><strong>溜溜自学</strong><span>zixue.3D66.COM</span></div>
      </div>
    `;
  }
}
